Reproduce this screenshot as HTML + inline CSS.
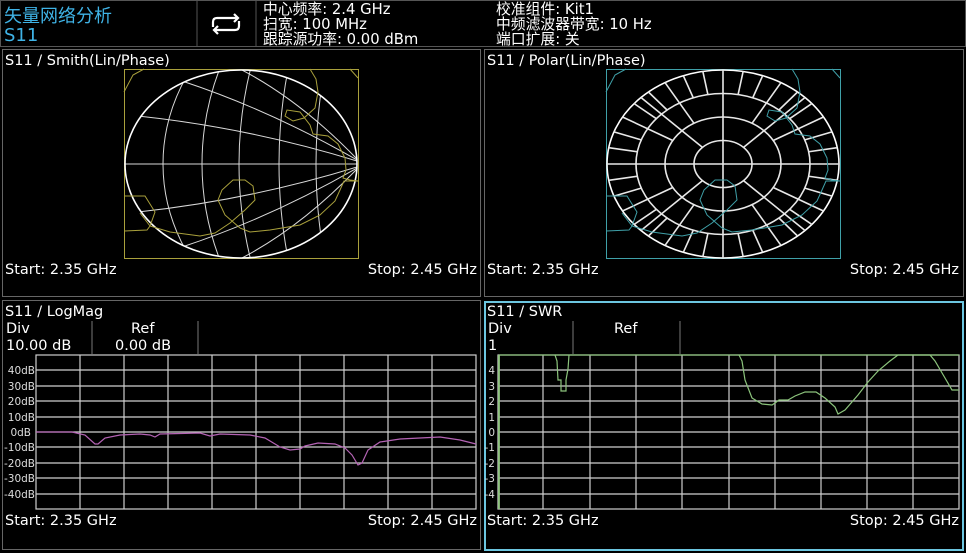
<!DOCTYPE html>
<html><head><meta charset="utf-8"><style>
html,body{margin:0;padding:0;background:#000;width:966px;height:553px;overflow:hidden}
svg{display:block}
text{font-family:"DejaVu Sans","Noto Sans CJK SC",sans-serif}
</style></head><body>
<svg width="966" height="553" viewBox="0 0 966 553" xmlns="http://www.w3.org/2000/svg">
<defs>
<clipPath id="uc"><ellipse cx="241" cy="164" rx="116" ry="94"/></clipPath>
</defs>
<rect x="0.5" y="0.5" width="965" height="46" fill="#000" stroke="#555"/>
<line x1="197" y1="0" x2="197" y2="47" stroke="#555"/>
<line x1="256" y1="0" x2="256" y2="47" stroke="#555"/>
<text x="4" y="22" fill="#3fb3e6" font-size="18">矢量网络分析</text>
<text x="4" y="41" fill="#3fb3e6" font-size="18">S11</text>
<g fill="none" stroke="#fff" stroke-width="2.2">
<path d="M213 27 V22 Q213 18 217 18 H238"/><path d="M234 14 L238 18 L234 22"/>
<path d="M239 21 V26 Q239 30 235 30 H214"/><path d="M218 26 L214 30 L218 34"/>
</g>
<g fill="#fff" font-size="14.8">
<text x="263" y="14">中心频率: 2.4 GHz</text>
<text x="263" y="29">扫宽: 100 MHz</text>
<text x="263" y="44">跟踪源功率: 0.00 dBm</text>
<text x="496" y="14">校准组件: Kit1</text>
<text x="496" y="29">中频滤波器带宽: 10 Hz</text>
<text x="496" y="44">端口扩展: 关</text>
</g>
<rect x="2.5" y="49.5" width="478" height="247" fill="none" stroke="#666"/>
<rect x="484.5" y="49.5" width="479" height="247" fill="none" stroke="#666"/>
<rect x="2.5" y="300.5" width="478" height="249" fill="none" stroke="#666"/>
<rect x="485" y="302" width="478" height="248" fill="none" stroke="#6cc6e0" stroke-width="2"/>
<g fill="#fff" font-size="14.5">
<text x="5" y="65">S11 / Smith(Lin/Phase)</text>
<text x="487" y="65">S11 / Polar(Lin/Phase)</text>
<text x="5" y="274">Start: 2.35 GHz</text><text x="477" y="274" text-anchor="end">Stop: 2.45 GHz</text>
<text x="487" y="274">Start: 2.35 GHz</text><text x="959" y="274" text-anchor="end">Stop: 2.45 GHz</text>
<text x="5" y="316">S11 / LogMag</text>
<text x="487" y="316">S11 / SWR</text>
<text x="6" y="333">Div</text><text x="131" y="333">Ref</text>
<text x="6" y="350">10.00 dB</text><text x="115" y="350">0.00 dB</text>
<text x="488" y="333">Div</text><text x="614" y="333">Ref</text>
<text x="488" y="350">1</text>
<text x="5" y="525">Start: 2.35 GHz</text><text x="477" y="525" text-anchor="end">Stop: 2.45 GHz</text>
<text x="487" y="525">Start: 2.35 GHz</text><text x="959" y="525" text-anchor="end">Stop: 2.45 GHz</text>
</g>
<g stroke="#777"><line x1="92" y1="321" x2="92" y2="354"/><line x1="198" y1="321" x2="198" y2="354"/>
<line x1="573" y1="321" x2="573" y2="354"/><line x1="680" y1="321" x2="680" y2="354"/></g>

<rect x="124.5" y="69.5" width="234" height="189" fill="none" stroke="#a9a03c"/>
<g fill="none" stroke="#d8d8d8" stroke-width="1">
<g clip-path="url(#uc)">
<line x1="124" y1="164" x2="358" y2="164"/>
<ellipse cx="423" cy="164" rx="260" ry="211"/>
<ellipse cx="602" cy="164" rx="400" ry="324"/>
<ellipse cx="839" cy="164" rx="600" ry="486"/>
<ellipse cx="1029" cy="164" rx="750" ry="608"/>
<ellipse cx="1116" cy="164" rx="800" ry="648"/>
<path d="M357 161 Q250 128 138 116"/>
<path d="M357 160 Q270 110 182 81"/>
<path d="M357 159 Q300 100 240 69"/>
<path d="M357 167 Q250 200 138 212"/>
<path d="M357 168 Q270 218 182 247"/>
<path d="M357 169 Q300 228 240 259"/>
</g>
<ellipse cx="241" cy="164" rx="116" ry="94" stroke="#fff" stroke-width="1.6"/>
</g>
<g fill="none" stroke="#a9a03c" stroke-width="1">
<polyline points="124,92 133,75 144,69"/>
<polyline points="310,69 316,79 318,92 315,108 304,118 293,121 285,116 287,110 300,112 310,125 313,134 328,136 338,144 345,158 346,170 343,178 350,180 358,181 344,181 340,190 335,201 320,215 300,225 270,230 250,232 240,228"/>
<polyline points="350,69 358,78"/>
<polyline points="124,196 145,196 155,212 150,226 147,230 124,231"/>
<polyline points="140,213 150,226 170,232 200,236 215,233 230,223 245,210 255,200 253,186 245,180 233,180 222,190 218,200 225,215 240,228"/>
</g>

<rect x="606.5" y="69.5" width="234" height="189" fill="none" stroke="#3fa0a8"/>
<g fill="none" stroke="#e8e8e8" stroke-width="1.6">
<ellipse cx="723" cy="164" rx="116" ry="94" stroke="#fff"/>
<ellipse cx="723" cy="164" rx="87" ry="70.5"/>
<ellipse cx="723" cy="164" rx="58" ry="47"/>
<ellipse cx="723" cy="164" rx="29" ry="23.5"/>
<line x1="607" y1="164" x2="839" y2="164"/><line x1="723" y1="70" x2="723" y2="258"/>
</g>
<g transform="translate(723,164) scale(116,94)" stroke="#e8e8e8" stroke-width="1.6">
<line x1=".75" y1="0" x2="1" y2="0" vector-effect="non-scaling-stroke" transform="rotate(10)"/>
<line x1=".75" y1="0" x2="1" y2="0" vector-effect="non-scaling-stroke" transform="rotate(20)"/>
<line x1=".5" y1="0" x2="1" y2="0" vector-effect="non-scaling-stroke" transform="rotate(30)"/>
<line x1=".75" y1="0" x2="1" y2="0" vector-effect="non-scaling-stroke" transform="rotate(40)"/>
<line x1=".25" y1="0" x2="1" y2="0" vector-effect="non-scaling-stroke" transform="rotate(45)"/>
<line x1=".75" y1="0" x2="1" y2="0" vector-effect="non-scaling-stroke" transform="rotate(50)"/>
<line x1=".5" y1="0" x2="1" y2="0" vector-effect="non-scaling-stroke" transform="rotate(60)"/>
<line x1=".75" y1="0" x2="1" y2="0" vector-effect="non-scaling-stroke" transform="rotate(70)"/>
<line x1=".75" y1="0" x2="1" y2="0" vector-effect="non-scaling-stroke" transform="rotate(80)"/>
<line x1=".75" y1="0" x2="1" y2="0" vector-effect="non-scaling-stroke" transform="rotate(100)"/>
<line x1=".75" y1="0" x2="1" y2="0" vector-effect="non-scaling-stroke" transform="rotate(110)"/>
<line x1=".5" y1="0" x2="1" y2="0" vector-effect="non-scaling-stroke" transform="rotate(120)"/>
<line x1=".75" y1="0" x2="1" y2="0" vector-effect="non-scaling-stroke" transform="rotate(130)"/>
<line x1=".25" y1="0" x2="1" y2="0" vector-effect="non-scaling-stroke" transform="rotate(135)"/>
<line x1=".75" y1="0" x2="1" y2="0" vector-effect="non-scaling-stroke" transform="rotate(140)"/>
<line x1=".5" y1="0" x2="1" y2="0" vector-effect="non-scaling-stroke" transform="rotate(150)"/>
<line x1=".75" y1="0" x2="1" y2="0" vector-effect="non-scaling-stroke" transform="rotate(160)"/>
<line x1=".75" y1="0" x2="1" y2="0" vector-effect="non-scaling-stroke" transform="rotate(170)"/>
<line x1=".75" y1="0" x2="1" y2="0" vector-effect="non-scaling-stroke" transform="rotate(190)"/>
<line x1=".75" y1="0" x2="1" y2="0" vector-effect="non-scaling-stroke" transform="rotate(200)"/>
<line x1=".5" y1="0" x2="1" y2="0" vector-effect="non-scaling-stroke" transform="rotate(210)"/>
<line x1=".75" y1="0" x2="1" y2="0" vector-effect="non-scaling-stroke" transform="rotate(220)"/>
<line x1=".25" y1="0" x2="1" y2="0" vector-effect="non-scaling-stroke" transform="rotate(225)"/>
<line x1=".75" y1="0" x2="1" y2="0" vector-effect="non-scaling-stroke" transform="rotate(230)"/>
<line x1=".5" y1="0" x2="1" y2="0" vector-effect="non-scaling-stroke" transform="rotate(240)"/>
<line x1=".75" y1="0" x2="1" y2="0" vector-effect="non-scaling-stroke" transform="rotate(250)"/>
<line x1=".75" y1="0" x2="1" y2="0" vector-effect="non-scaling-stroke" transform="rotate(260)"/>
<line x1=".75" y1="0" x2="1" y2="0" vector-effect="non-scaling-stroke" transform="rotate(280)"/>
<line x1=".75" y1="0" x2="1" y2="0" vector-effect="non-scaling-stroke" transform="rotate(290)"/>
<line x1=".5" y1="0" x2="1" y2="0" vector-effect="non-scaling-stroke" transform="rotate(300)"/>
<line x1=".75" y1="0" x2="1" y2="0" vector-effect="non-scaling-stroke" transform="rotate(310)"/>
<line x1=".25" y1="0" x2="1" y2="0" vector-effect="non-scaling-stroke" transform="rotate(315)"/>
<line x1=".75" y1="0" x2="1" y2="0" vector-effect="non-scaling-stroke" transform="rotate(320)"/>
<line x1=".5" y1="0" x2="1" y2="0" vector-effect="non-scaling-stroke" transform="rotate(330)"/>
<line x1=".75" y1="0" x2="1" y2="0" vector-effect="non-scaling-stroke" transform="rotate(340)"/>
<line x1=".75" y1="0" x2="1" y2="0" vector-effect="non-scaling-stroke" transform="rotate(350)"/>
</g>
<g transform="translate(482,0)" fill="none" stroke="#3fa0a8" stroke-width="1">
<polyline points="124,92 133,75 144,69"/>
<polyline points="310,69 316,79 318,92 315,108 304,118 293,121 285,116 287,110 300,112 310,125 313,134 328,136 338,144 345,158 346,170 343,178 350,180 358,181 344,181 340,190 335,201 320,215 300,225 270,230 250,232 240,228"/>
<polyline points="350,69 358,78"/>
<polyline points="124,196 145,196 155,212 150,226 147,230 124,231"/>
<polyline points="140,213 150,226 170,232 200,236 215,233 230,223 245,210 255,200 253,186 245,180 233,180 222,190 218,200 225,215 240,228"/>
</g>

<g stroke="#cfcfcf" stroke-width="1.2" fill="none">
<rect x="36" y="355" width="440" height="154"/>
<path d="M80 355V509M124 355V509M168 355V509M212 355V509M256 355V509M300 355V509M344 355V509M388 355V509M432 355V509
M36 370H476M36 386H476M36 401H476M36 417H476M36 432H476M36 447H476M36 463H476M36 478H476M36 494H476"/>
</g>
<g fill="#ddd" font-size="10.5" text-anchor="end">
<text x="35" y="374">40dB</text><text x="35" y="390">30dB</text><text x="35" y="405">20dB</text><text x="35" y="421">10dB</text>
<text x="31" y="436">0dB</text><text x="35" y="451">-10dB</text><text x="35" y="467">-20dB</text><text x="35" y="482">-30dB</text><text x="35" y="498">-40dB</text>
</g>
<polyline fill="none" stroke="#b463b4" stroke-width="1.2" points="36,432 72,432 85,435 95,444 98,444 105,438 120,435 140,434 150,435 155,437 160,434 200,433 210,436 220,434 250,435 265,438 280,447 290,450 300,449 305,446 318,443 335,444 345,448 352,455 358,465 362,463 368,450 380,442 400,439 440,437 460,440 476,444"/>

<g stroke="#cfcfcf" stroke-width="1.2" fill="none">
<rect x="498" y="355" width="461" height="154"/>
<path d="M543 355V509M590 355V509M636 355V509M682 355V509M729 355V509M775 355V509M821 355V509M867 355V509M913 355V509
M498 370H959M498 386H959M498 401H959M498 417H959M498 432H959M498 447H959M498 463H959M498 478H959M498 494H959"/>
</g>
<g fill="#ddd" font-size="10.5" text-anchor="end">
<text x="495" y="374">4</text><text x="495" y="390">3</text><text x="495" y="405">2</text><text x="495" y="421">1</text>
<text x="495" y="436">0</text><text x="495" y="451">-1</text><text x="495" y="467">-2</text><text x="495" y="482">-3</text><text x="495" y="498">-4</text>
</g>
<g fill="none" stroke="#8cc47c" stroke-width="1.2">
<line x1="499" y1="355" x2="959" y2="355"/><line x1="499" y1="355" x2="499" y2="509" stroke-width="1.8"/>
<polyline points="555,355 557,361 558,380 561,380 561,391 566,391 566,380 568,369 569,355"/>
<polyline points="739,355 742,361 745,380 752,398 762,404 772,405 775,403 779,400 788,400 795,396 805,392 816,392 825,398 835,407 838,414 845,410 858,395 868,382 878,371 890,361 898,355 930,355 935,361 945,378 952,390 959,390"/>
</g>
</svg>
</body></html>
